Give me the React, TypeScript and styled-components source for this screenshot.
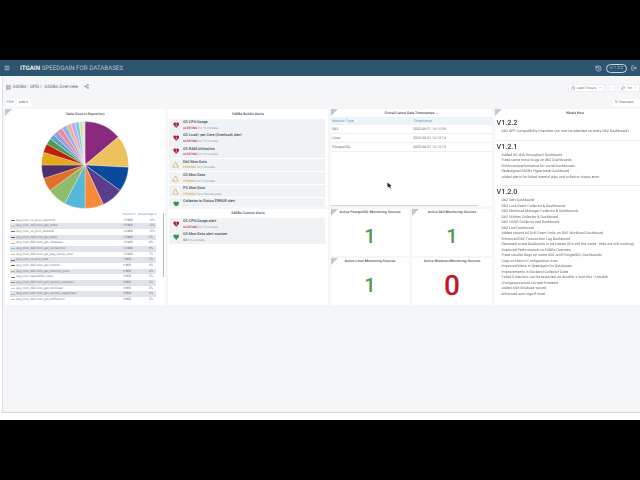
import React from "react";
import styled, { createGlobalStyle } from "styled-components";
import { Menu, LayoutGrid, Share2, Clock, ZoomOut, RefreshCw, ChevronDown, LogOut, History, Monitor } from "lucide-react";

const GlobalStyle = createGlobalStyle`
  html, body { margin: 0; padding: 0; background: #000; }
  body { font-family: Roboto, "Liberation Sans", sans-serif; text-rendering: geometricPrecision; }
`;

const Screen = styled.div`
  width: 640px;
  height: 480px;
  overflow: hidden;
  background: #000;
  padding-top: 60px;
  box-sizing: border-box;
`;

const TopBar = styled.div`
  height: 16px;
  background: #2d5570;
  display: flex;
  align-items: center;
  color: #dfe7ec;
  padding: 0 3px 0 4px;
`;

const Brand = styled.div`
  margin-left: 10px;
  font-size: 6.2px;
  color: #b9c9d3;
  white-space: nowrap;
  b { color: #e6edf1; font-weight: 700; }
`;

const TopRight = styled.div`
  margin-left: auto;
  display: flex;
  align-items: center;
  gap: 4px;
`;

const VersionPill = styled.div`
  border: 1px solid #c9d6de;
  border-radius: 5px;
  height: 7px;
  width: 19px;
  font-size: 4.2px;
  line-height: 7px;
  text-align: center;
  color: #b9c9d3;
`;

const Page = styled.div`
  height: 344px;
  background: #fff;
  filter: blur(0.3px);
`;

const Content = styled.div`
  height: 337px;
  margin-left: 1.5px;
  box-sizing: border-box;
  background: #f5f6f8;
  border-left: 1px solid #dfe0e4;
  border-bottom: 1px solid #d8d9dd;
`;

const Toolbar = styled.div`
  height: 23px;
  display: flex;
  align-items: center;
  padding-left: 3px;
  box-sizing: border-box;
  color: #666b73;
  font-size: 4.7px;
`;

const Crumb = styled.span`
  margin-left: 2px;
  white-space: nowrap;
`;

const ToolRight = styled.div`
  margin-left: auto;
  display: flex;
  align-items: center;
  gap: 3px;
  font-size: 3.5px;
`;

const ToolButton = styled.div<{ $width: number }>`
  height: 8px;
  width: ${(p) => p.$width}px;
  box-sizing: border-box;
  padding: 0 2px;
  display: flex;
  align-items: center;
  gap: 2px;
  background: #fff;
  border: 0.5px solid #eceef2;
  white-space: nowrap;
`;

const VarRow = styled.div`
  height: 10px;
  display: flex;
  align-items: flex-start;
  gap: 2px;
  padding-left: 3px;
  font-size: 3.6px;
`;

const VarLabel = styled.div`
  height: 7px;
  line-height: 7px;
  width: 9px;
  text-align: center;
  color: #4a90c0;
  background: #fff;
`;

const VarValue = styled(VarLabel)`
  color: #666b73;
  width: 14px;
`;

const OverviewBtn = styled(VarLabel)`
  margin-left: auto;
  color: #666b73;
  white-space: nowrap;
  width: 27px;
  text-align: left;
  padding-left: 2px;
  box-sizing: border-box;
  overflow: hidden;
`;

const Grid = styled.div`
  display: grid;
  grid-template-columns: 160px 160px 161px 160px;
  column-gap: 3px;
  padding-left: 2.5px;
  height: 196px;
`;

const Column = styled.div`
  display: flex;
  flex-direction: column;
  gap: 3px;
  min-height: 0;
`;

const Panel = styled.div<{ $fill?: boolean; $height?: number }>`
  position: relative;
  background: #fff;
  flex: ${(p) => (p.$fill ? "1" : "none")};
  height: ${(p) => (p.$height ? `${p.$height}px` : "auto")};
  min-height: 0;
  overflow: hidden;
  box-sizing: border-box;
`;

const Corner = styled.div`
  position: absolute;
  left: 0;
  top: 0;
  width: 0;
  height: 0;
  border-top: 7px solid #c4c6cc;
  border-right: 7px solid transparent;
`;

const PanelTitle = styled.div<{ $height: number }>`
  height: ${(p) => p.$height}px;
  line-height: ${(p) => p.$height}px;
  font-size: 3.5px;
  font-weight: 500;
  text-align: center;
  white-space: nowrap;
  color: #4a4e55;
`;

const Pie = styled.svg`
  display: block;
  margin: 1.5px 0 0 36px;
`;

const Legend = styled.div`
  position: relative;
  margin: 2.5px 0 0 5px;
  width: 154px;
  font-size: 3.15px;
  color: #777c84;
`;

const LegendHead = styled.div`
  height: 6.5px;
  line-height: 6.5px;
  width: 146px;
  display: flex;
  justify-content: flex-end;
  gap: 3px;
  color: #59a5c4;
  white-space: nowrap;
`;

const LegendRow = styled.div<{ $shade: boolean }>`
  height: 5.69px;
  line-height: 5.69px;
  width: 146px;
  display: flex;
  align-items: center;
  white-space: nowrap;
  background: ${(p) => (p.$shade ? "#dfe3ea" : "transparent")};
`;

const Swatch = styled.i<{ $color: string }>`
  width: 4px;
  height: 1px;
  margin: 0 1px 0 1px;
  opacity: 0.75;
  background: ${(p) => p.$color};
`;

const LegendName = styled.span`
  flex: 1;
`;

const LegendSize = styled.span`
  width: 26px;
`;

const LegendPct = styled.span`
  width: 7px;
`;

const ScrollThumb = styled.div`
  position: absolute;
  right: 0;
  top: 2px;
  width: 1.5px;
  height: 64px;
  background: #b4b8bf;
`;

const AlertList = styled.div`
  display: flex;
  flex-direction: column;
  gap: 0.7px;
`;

const AlertRow = styled.div`
  height: 12.5px;
  margin: 0 3px 0 0.5px;
  flex: none;
  display: flex;
  align-items: center;
  background: #f0f3f6;
`;

const AlertIcon = styled.div`
  width: 14.5px;
  flex: none;
  display: flex;
  justify-content: center;
`;

const AlertName = styled.div`
  font-size: 3.75px;
  line-height: 5.500px;
  white-space: nowrap;
  color: #44484f;
  font-weight: 500;
`;

const AlertState = styled.div`
  font-size: 3.1px;
  line-height: 4.500px;
  white-space: nowrap;
  color: #90959c;
`;

const StateWord = styled.span<{ $color: string }>`
  color: ${(p) => p.$color};
  font-weight: 500;
`;

const TableHead = styled.div`
  height: 8px;
  line-height: 8px;
  background: #edf4f8;
  display: grid;
  grid-template-columns: 81px 1fr;
  padding-left: 1px;
  font-size: 3.7px;
  color: #5aa3cb;
`;

const TableRow = styled.div`
  height: 9px;
  line-height: 9px;
  display: grid;
  grid-template-columns: 81px 1fr;
  padding-left: 1px;
  font-size: 3.6px;
  color: #6c7179;
  border-bottom: 0.5px solid #eef0f3;
  box-sizing: border-box;
`;

const HScroll = styled.div`
  position: absolute;
  left: 0;
  bottom: 0;
  width: 147px;
  height: 1.5px;
  background: #d2d4d9;
`;

const Cursor = styled.svg`
  position: absolute;
  left: 56px;
  top: 73px;
`;

const StatGrid = styled.div`
  display: grid;
  grid-template-columns: 78px 80px;
  grid-auto-rows: 47px;
  gap: 2px 3px;
`;

const StatValue = styled.div<{ $color: string; $size: number }>`
  height: 40px;
  display: flex;
  align-items: center;
  justify-content: center;
  color: ${(p) => p.$color};
  font-size: ${(p) => p.$size}px;
  font-weight: 500;
`;

const NewsBody = styled.div`
  padding-left: 1.5px;
  color: #696e75;
`;

const Version = styled.div`
  height: 10px;
  font-size: 7.2px;
  line-height: 10px;
  font-weight: 500;
  color: #3a3e44;
`;

const NewsList = styled.ul`
  margin: 1px 0 5px;
  padding: 0 0 0 5px;
  font-size: 3.65px;
  line-height: 5.5px;
  white-space: nowrap;
`;

const Rule = styled.div`
  height: 1px;
  background: #eceef1;
  margin-bottom: 1px;
`;

const heart = (
  <svg width="6.500" height="6.500" viewBox="0 0 24 24">
    <path d="M12 22 2.500 11.500C-.5 7 2.500 2 7 2c2 0 4 1 5 3 1-2 3-3 5-3 4.500 0 7.500 5 4.500 9.500z" fill="#b3173a" />
    <path d="M12 7v7M12 16v2" stroke="#fff" strokeWidth="2.500" />
  </svg>
);

const okHeart = (
  <svg width="6.500" height="6.500" viewBox="0 0 24 24">
    <path d="M12 22 2.500 11.500C-.5 7 2.500 2 7 2c2 0 4 1 5 3 1-2 3-3 5-3 4.500 0 7.500 5 4.500 9.500z" fill="#2f9a4c" />
  </svg>
);

const warn = (
  <svg width="7" height="7" viewBox="0 0 24 24">
    <path d="M12 3 2 21h20z" fill="none" stroke="#e0a33e" strokeWidth="2.400" strokeLinejoin="round" />
  </svg>
);

const pieSlices: [number, string][] = [
  [50, "#8a2a7e"], [43, "#eec15f"], [33, "#0a4a9c"], [29, "#5a3d8c"], [25, "#f58a3c"],
  [28, "#55b7d9"], [26, "#8fbb6e"], [18, "#e0702a"], [18, "#4c2f66"], [17, "#e6a817"],
  [12, "#c01f0a"], [8, "#4f9a48"], [7, "#5aa5cf"], [7, "#a49ad8"], [7, "#e88a9a"],
  [7, "#8fb4e8"], [6, "#f0b0a0"], [6, "#c8a8e8"], [5, "#70d0e0"], [5, "#d8e0a8"], [3, "#d8dade"],
];

function slicePath(from: number, to: number, r: number) {
  const pt = (deg: number) => {
    const a = ((deg - 90) * Math.PI) / 180;
    return `${(44 + r * Math.cos(a)).toFixed(2)} ${(44 + r * Math.sin(a)).toFixed(2)}`;
  };
  return `M44 44L${pt(from)}A${r} ${r} 0 0 1 ${pt(to)}Z`;
}

function PieChart() {
  let start = 0;
  return (
    <Pie width="88" height="88" viewBox="0 0 88 88">
      {pieSlices.map(([sweep, color]) => {
        const d = slicePath(start, start + sweep, 43.500);
        start += sweep;
        return <path key={color} d={d} fill={color} stroke="#fff" strokeWidth="0.3" />;
      })}
    </Pie>
  );
}

const legendRows = [
  ["spg_mon_os_proc_memInfo", "15 MiB", "12%", "#2b3a67"],
  ["spg_mon_db2.mon_get_index", "15 MiB", "12%", "#e0c060"],
  ["spg_mon_os_proc_diskstat", "14 MiB", "10%", "#1f4a9c"],
  ["spg_mon_db2.mon_get_table", "13 MiB", "9%", "#4c2f66"],
  ["spg_mon_db2.mon_get_database", "12 MiB", "8%", "#f58a3c"],
  ["spg_mon_db2.mon_get_connection", "12 MiB", "8%", "#55b7d9"],
  ["spg_mon_db2.mon_get_pkg_cache_stmt", "10 MiB", "7%", "#8fbb6e"],
  ["spg_mon_os_proc_stat", "7 MiB", "5%", "#7a3a30"],
  ["spg_mon_db2.mon_get_routine", "6 MiB", "4%", "#2b2b40"],
  ["spg_mon_db2.mon_get_memory_pool", "6 MiB", "4%", "#c9a23a"],
  ["spg_mon.hypertable_sizes", "5 MiB", "3%", "#8a2a5e"],
  ["spg_mon_db2.mon_get_service_subclass", "3 MiB", "2%", "#4f9a48"],
  ["spg_mon_db2.mon_get_workload", "3 MiB", "2%", "#8fb4e8"],
  ["spg_mon_db2.mon_get_service_superclass", "3 MiB", "2%", "#a49ad8"],
  ["spg_mon_db2.mon_get_bufferpool", "3 MiB", "2%", "#e88a9a"],
];

const builtinAlerts = [
  { icon: heart, name: "OS CPU Usage", word: "ALERTING", color: "#c4284a", rest: " for 14 minutes" },
  { icon: heart, name: "OS Load1 per Core (Overload) alert", word: "ALERTING", color: "#c4284a", rest: " for 13 minutes" },
  { icon: heart, name: "OS RAM Utilisation", word: "ALERTING", color: "#c4284a", rest: " for 16 minutes" },
  { icon: warn, name: "Db2 Mon Data", word: "PENDING", color: "#e8a33d", rest: " for 5 minutes" },
  { icon: warn, name: "OS Mon Data", word: "PENDING", color: "#e8a33d", rest: " for 5 minutes" },
  { icon: warn, name: "PG Mon Data", word: "PENDING", color: "#e8a33d", rest: " for a few seconds" },
  { icon: okHeart, name: "Collector in Status ERROR alert", word: "OK", color: "#2f9a4c", rest: " for 3 minutes" },
];

const customAlerts = [
  { icon: heart, name: "OS CPU Usage alert", word: "ALERTING", color: "#c4284a", rest: " for 13 minutes" },
  { icon: okHeart, name: "OS Mon Data alert custom", word: "OK", color: "#6c7179", rest: " for a minute" },
];

const timestamps = [
  ["Db2", "2022-06-21 14:12:30"],
  ["Linux", "2022-06-21 14:13:16"],
  ["PostgreSQL", "2022-06-21 14:13:15"],
];

const stats = [
  { title: "Active PostgreSQL Monitoring Sources", value: "1", color: "#4f9a50", size: 20, corner: true },
  { title: "Active Db2 Monitoring Sources", value: "1", color: "#4f9a50", size: 20, corner: true },
  { title: "Active Linux Monitoring Sources", value: "1", color: "#4f9a50", size: 20, corner: true },
  { title: "Active Windows Monitoring Sources", value: "0", color: "#c4162a", size: 28, corner: false },
];

const news = [
  { version: "V1.2.2", items: ["Db2 DPF compatibility (member can now be selected on every Db2 Dashboard)"] },
  {
    version: "V1.2.1",
    items: [
      "Added OS disk throughput Dashboard",
      "Fixed some minor bugs on db2 Dashboards",
      "Enhanced performance for some Dashboards",
      "Redesigned S4DBs Hypertable Dashboard",
      "added alerts for failed internal jobs and collector status error",
    ],
  },
  {
    version: "V1.2.0",
    items: [
      "Db2 Sort Dashboard",
      "Db2 Lock Event Collector & Dashboards",
      "Db2 Workload Manager Collector & Dashboards",
      "Db2 Utilities Collector & Dashboard",
      "Db2 HADR Collector and Dashboard",
      "Db2 Live Dashboard",
      "Added around 60 Drill Down Links on Db2 Workload Dashboard",
      "Enhanced Db2 Transaction Log Dashboard",
      "Renamed some Dasboards to be clearer (IDs still the same - links are still working)",
      "Improved Performance on S4DBs Overview",
      "Fixed smaller Bugs on some Db2 and PostgreSQL Dashboards",
      "Copy as New in Configuration Area",
      "Improved Menu in Speedgain for Databases",
      "Improvements in Backend Collector Code",
      "Failed Collectors can be restarted via disable -> wait 60s -> enable",
      "change password via web frontend",
      "added add database wizard",
      "enhanced auto logoff timer",
    ],
  },
];

function Alerts({ items }: { items: typeof builtinAlerts }) {
  return (
    <AlertList>
      {items.map((a) => (
        <AlertRow key={a.name}>
          <AlertIcon>{a.icon}</AlertIcon>
          <div>
            <AlertName>{a.name}</AlertName>
            <AlertState>
              <StateWord $color={a.color}>{a.word}</StateWord>
              {a.rest}
            </AlertState>
          </div>
        </AlertRow>
      ))}
    </AlertList>
  );
}

export default function App() {
  return (
    <Screen>
      <GlobalStyle />
      <TopBar>
        <Menu size={6} strokeWidth={2.500} />
        <Brand>
          <b>ITGAIN</b> SPEEDGAIN FOR DATABASES
        </Brand>
        <TopRight>
          <History size={7} />
          <VersionPill>V 1.2.2</VersionPill>
          <LogOut size={6} strokeWidth={2.500} />
        </TopRight>
      </TopBar>
      <Page>
        <Content>
          <Toolbar>
            <LayoutGrid size={5} />
            <Crumb>S4DBs - SPG&nbsp;/&nbsp;&nbsp;S4DBs Overview</Crumb>
            <Crumb>
              <Share2 size={5} style={{ marginLeft: 4 }} />
            </Crumb>
            <ToolRight>
              <ToolButton $width={37}>
                <Clock size={4} /> Last 3 hours <ChevronDown size={3} style={{ marginLeft: "auto" }} />
              </ToolButton>
              <ToolButton $width={7}>
                <ZoomOut size={4} />
              </ToolButton>
              <ToolButton $width={22}>
                <RefreshCw size={4} /> 1m <ChevronDown size={3} />
              </ToolButton>
            </ToolRight>
          </Toolbar>
          <VarRow>
            <VarLabel>PDB</VarLabel>
            <VarValue>pdb ▾</VarValue>
            <OverviewBtn>
              <Monitor size={3} /> Overview
            </OverviewBtn>
          </VarRow>
          <Grid>
            <Panel>
              <Corner />
              <PanelTitle $height={10}>Table Sizes in Repository</PanelTitle>
              <PieChart />
              <Legend>
                <ScrollThumb />
                <LegendHead>
                  <span>current ▾</span>
                  <span>percentage ▾</span>
                </LegendHead>
                {legendRows.map(([name, size, pct, color], i) => (
                  <LegendRow key={name} $shade={i % 2 === 1}>
                    <Swatch $color={color} />
                    <LegendName>{name}</LegendName>
                    <LegendSize>{size}</LegendSize>
                    <LegendPct>{pct}</LegendPct>
                  </LegendRow>
                ))}
              </Legend>
            </Panel>
            <Column>
              <Panel $height={97}>
                <PanelTitle $height={10}>S4DBs Buildin Alerts</PanelTitle>
                <Alerts items={builtinAlerts} />
              </Panel>
              <Panel $fill>
                <PanelTitle $height={9}>S4DBs Custom Alerts</PanelTitle>
                <Alerts items={customAlerts} />
              </Panel>
            </Column>
            <Column>
              <Panel $height={97}>
                <Corner />
                <PanelTitle $height={8}>Overall Latest Data Timestamps ⌄</PanelTitle>
                <TableHead>
                  <span>Monitor Type</span>
                  <span>Timestamp</span>
                </TableHead>
                {timestamps.map(([type, time]) => (
                  <TableRow key={type}>
                    <span>{type}</span>
                    <span>{time}</span>
                  </TableRow>
                ))}
                <Cursor width="5" height="7" viewBox="0 0 10 14">
                  <path d="M1 1v10l3-2 2 4 2-1-2-4h3z" fill="#222" />
                </Cursor>
                <HScroll />
              </Panel>
              <StatGrid>
                {stats.map((s) => (
                  <Panel key={s.title}>
                    {s.corner && <Corner />}
                    <PanelTitle $height={7}>{s.title}</PanelTitle>
                    <StatValue $color={s.color} $size={s.size}>
                      {s.value}
                    </StatValue>
                  </Panel>
                ))}
              </StatGrid>
            </Column>
            <Panel>
              <Corner />
              <PanelTitle $height={9}>What's New</PanelTitle>
              <NewsBody>
                {news.map((n, i) => (
                  <div key={n.version}>
                    <Version>{n.version}</Version>
                    <NewsList>
                      {n.items.map((item) => (
                        <li key={item}>{item}</li>
                      ))}
                    </NewsList>
                    {i < news.length - 1 && <Rule />}
                  </div>
                ))}
              </NewsBody>
            </Panel>
          </Grid>
        </Content>
      </Page>
    </Screen>
  );
}
